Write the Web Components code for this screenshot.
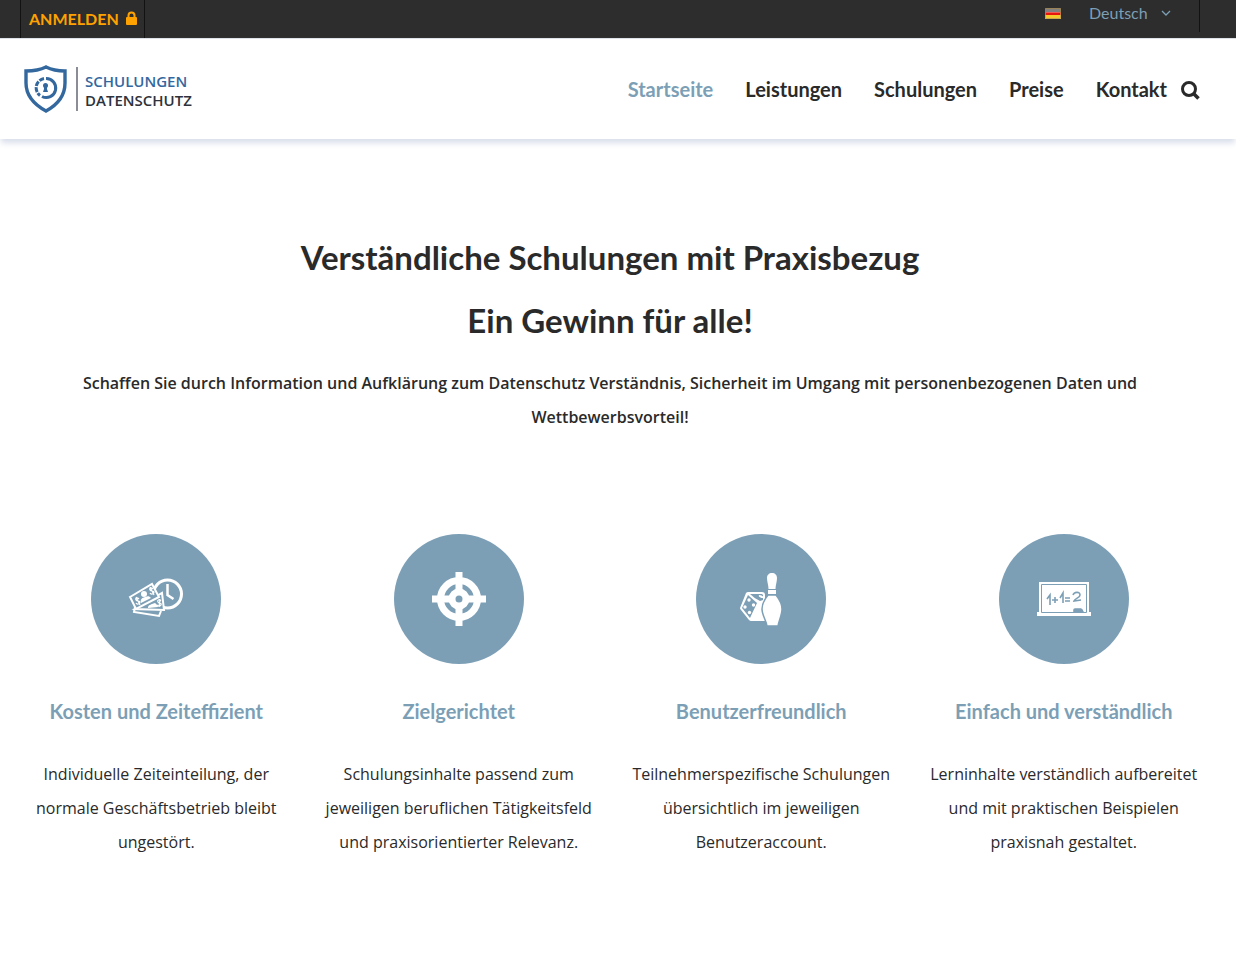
<!DOCTYPE html>
<html lang="de">
<head>
<meta charset="utf-8">
<meta name="viewport" content="width=device-width, initial-scale=1">
<title>Schulungen Datenschutz</title>
<style>
:root {
  --accent: #7c9fb6;
  --dark: #2d2d2d;
  --text: #2a2a2a;
  --login: #ffa200;
  --heading-font: Lato, "Liberation Sans", sans-serif;
}
body {
  margin: 0;
  background: #fff;
  color: var(--text);
  font-family: "Open Sans", "Liberation Sans", sans-serif;
  font-size: 16px;
}
</style>
</head>
<body>
<top-bar></top-bar>
<site-header>
  <site-logo slot="logo"></site-logo>
  <nav-link href="#start" active>Startseite</nav-link>
  <nav-link href="#leistungen">Leistungen</nav-link>
  <nav-link href="#schulungen">Schulungen</nav-link>
  <nav-link href="#preise">Preise</nav-link>
  <nav-link href="#kontakt">Kontakt</nav-link>
</site-header>
<main>
  <intro-section>
    <span slot="title">Verständliche Schulungen mit Praxisbezug</span>
    <span slot="subtitle">Ein Gewinn für alle!</span>
    Schaffen Sie durch Information und Aufklärung zum Datenschutz Verständnis, Sicherheit im Umgang mit personenbezogenen Daten und Wettbewerbsvorteil!
  </intro-section>
  <feature-list>
    <feature-card>
      <svg slot="icon" width="56" height="56" viewBox="0 0 56 56" fill="none" stroke="#fff" stroke-width="2" aria-hidden="true">
        <circle cx="39.500" cy="23" r="14" stroke-width="3"/>
        <path d="M39.500 13v11l6 4" stroke-width="2.500"/>
        <path d="M7 36l-1 5 25 4 2-5" fill="#7c9fb6"/>
        <path d="M7 38l27-16 2 17z" fill="#7c9fb6"/>
        <path d="M20 37c0-3 2-3 4-4l3-1c1 1 3 2 3 4z" fill="#fff" stroke="none"/>
        <path d="M2 26l22-13 7 13-23 12z" fill="#7c9fb6"/>
        <circle cx="16" cy="23" r="3" fill="#fff" stroke="none"/>
        <path d="M13 32c-1-4 1-5 4-6s4-1 6 1z" fill="#fff" stroke="none"/>
        <path d="M11 28c-2-2-4-1-3 1s4 0 4 2-3 3-4 1M8 26l4 8M25 18c-2-2-4-1-3 1s4 0 4 2-3 3-4 1M22 16l4 8M33 30c-2-2-4-1-3 1s4 1 3 3-3 1-4 0M32 28l-1 8" stroke-width="1.200"/>
      </svg>
      <span slot="title">Kosten und Zeiteffizient</span>
      Individuelle Zeiteinteilung, der normale Geschäftsbetrieb bleibt ungestört.
    </feature-card>
    <feature-card>
      <svg slot="icon" width="56" height="56" viewBox="0 0 56 56" fill="none" stroke="#fff" aria-hidden="true">
        <circle cx="28" cy="28" r="18.500" stroke-width="7"/>
        <circle cx="28" cy="28" r="7" stroke-width="7"/>
        <path d="M28 1v20M28 35v20M1 28h20M35 28h20" stroke-width="7"/>
      </svg>
      <span slot="title">Zielgerichtet</span>
      Schulungsinhalte passend zum jeweiligen beruflichen Tätigkeitsfeld und praxisorientierter Relevanz.
    </feature-card>
    <feature-card>
      <svg slot="icon" width="56" height="56" viewBox="0 0 56 56" fill="#fff" aria-hidden="true">
        <path d="M15 21h14q3 0 3 3v26H18q-1 0-2-1L8 39q-1-1-1-2l6-15q1-1 2-1z"/>
        <path d="M15 24l9 8-7 15-8-10z" fill="#7c9fb6"/>
        <path d="M17 23h12l1 1v5l-3 1q-5-2-10-7z" fill="#7c9fb6"/>
        <ellipse cx="28" cy="25.500" rx="2.500" ry="1.200" transform="rotate(25 28 25.500)"/>
        <circle cx="16" cy="29" r="1.700"/>
        <circle cx="20.500" cy="34" r="1.700"/>
        <circle cx="12" cy="36" r="1.700"/>
        <circle cx="16.500" cy="41.500" r="1.700"/>
        <path d="M35 24h8c4 5 6 9 6 14 0 6-3 11-4 17H34c-1-6-5-11-5-17 0-5 2-9 6-14z" stroke="#7c9fb6" stroke-width="1.500"/>
        <path d="M35 19h8v4h-8zM35.500 18c0-4-1.500-7-1.500-11 0-3 2-5 5-5s5 2 5 5c0 4-1.500 7-1.500 11z"/>
      </svg>
      <span slot="title">Benutzerfreundlich</span>
      Teilnehmerspezifische Schulungen übersichtlich im jeweiligen Benutzeraccount.
    </feature-card>
    <feature-card>
      <svg slot="icon" width="56" height="56" viewBox="0 0 56 56" fill="none" stroke="#7c9fb6" stroke-width="1.600" aria-hidden="true">
        <path d="M3 11h50v30h2v4H1v-4h2z" fill="#fff" stroke="none"/>
        <path d="M5.500 41.500v-28h45v28z" stroke-width="1"/>
        <path d="M11 28l3-4v10M16 29h6M19 26v6M24 27l3-5v10M29 27h5M29 30h5M37 24c1-3 7-4 7 0 0 3-5 3-6 6l7-1"/>
        <path d="M38 41v-2q0-1 1-1h6q1 0 2 3z" fill="#7c9fb6"/>
      </svg>
      <span slot="title">Einfach und verständlich</span>
      Lerninhalte verständlich aufbereitet und mit praktischen Beispielen praxisnah gestaltet.
    </feature-card>
  </feature-list>
</main>

<script>
// dark strip with login link and language switch
const TopBarTemplate = document.createElement('template');
TopBarTemplate.innerHTML = `
<style>
:host {
  display: block;
  background: var(--dark);
  font-family: var(--heading-font);
}
.bar {
  display: flex;
  justify-content: space-between;
  align-items: flex-start;
  height: 38px;
  margin: 0 36px 0 20px;
}
.login {
  display: flex;
  align-items: center;
  gap: 7px;
  height: 38px;
  box-sizing: border-box;
  padding: 0 7px 2px 8px;
  border: solid #121212;
  border-width: 0 1px;
  color: var(--login);
  font-size: 16px;
  font-weight: 700;
  text-decoration: none;
}
.language {
  display: flex;
  align-items: center;
  height: 32px;
  box-sizing: border-box;
  padding: 0 28px 6px 0;
  border-right: 1px solid #121212;
}
select {
  appearance: none;
  margin: 0 0 0 28px;
  padding: 0 13px 0 0;
  border: 0;
  background: transparent;
  color: var(--accent);
  font: 400 16px/24px var(--heading-font);
  cursor: pointer;
}
option {
  background: var(--dark);
}
</style>
<div class="bar">
  <a class="login" href="#login">ANMELDEN
    <svg width="11" height="14" viewBox="0 0 11 14" aria-hidden="true">
      <path d="M2.500 7V4.500a3 3 0 0 1 6 0V7" fill="none" stroke="#ffa200" stroke-width="2"/>
      <rect y="6" width="11" height="8" rx="1" fill="#ffa200"/>
    </svg>
  </a>
  <div class="language">
    <svg width="16" height="11" viewBox="0 0 16 11" aria-hidden="true">
      <path d="M0 0h16v4H0z" fill="#4f4a48"/>
      <path d="M0 4h16v4H0z" fill="#e8150f"/>
      <path d="M0 7h16v4H0z" fill="#f6c92c"/>
      <path d="M1 1h14v4H1z" fill="#fff" opacity=".3"/>
      <path d="M.5.500h15v10H.5z" fill="none" stroke="#b99a5c" opacity=".7"/>
    </svg>
    <select aria-label="Sprache">
      <option selected>Deutsch</option>
    </select>
    <svg width="10" height="6" viewBox="0 0 10 6" fill="none" stroke="#7c9fb6" stroke-width="1.300" aria-hidden="true">
      <path d="M1 1l4 4 4-4"/>
    </svg>
  </div>
</div>
`;

class TopBar extends HTMLElement {
  constructor() {
    super();
    this.attachShadow({ mode: 'open' });
    this.shadowRoot.appendChild(TopBarTemplate.content.cloneNode(true));
  }
}

const SiteLogoTemplate = document.createElement('template');
SiteLogoTemplate.innerHTML = `
<style>
:host {
  display: block;
}
a {
  display: flex;
  align-items: center;
  color: #2e323c;
  font: 600 15px/19px "Open Sans", "Liberation Sans", sans-serif;
  text-decoration: none;
}
.name {
  display: flex;
  flex-direction: column;
  margin-left: 8px;
  padding: 5px 0 1px 7px;
  border-left: 2px solid #8b8d96;
}
.name span:first-child {
  color: #33689f;
}
</style>
<a href="#start">
  <svg width="44" height="48" viewBox="0 0 44 48" fill="none" stroke="#33689f" aria-hidden="true">
    <path d="M22 2C16 5 9 6 2 6v12c0 13 9 22 20 28 11-6 19-15 19-28V6C35 6 28 5 22 2z" stroke-width="3.400"/>
    <path d="M22 13.500a9.500 9.500 0 1 1-4 18" stroke-width="3"/>
    <path d="M20 13.500a9.500 9.500 0 0 0-4 17" stroke-width="3" stroke-dasharray="5 1.200"/>
    <circle cx="21.500" cy="20.500" r="2.500" fill="#33689f" stroke="none"/>
    <path d="M20 20h3v4l1 3h-5l1-3z" fill="#33689f" stroke="none"/>
  </svg>
  <span class="name"><span>SCHULUNGEN</span><span>DATENSCHUTZ</span></span>
</a>
`;

class SiteLogo extends HTMLElement {
  constructor() {
    super();
    this.attachShadow({ mode: 'open' });
    this.shadowRoot.appendChild(SiteLogoTemplate.content.cloneNode(true));
  }
}

const SiteHeaderTemplate = document.createElement('template');
SiteHeaderTemplate.innerHTML = `
<style>
:host {
  display: block;
  border-top: 1px solid #dde1e8;
  box-shadow: 0 5px 6px -1px #d9deea;
}
header {
  display: flex;
  justify-content: space-between;
  align-items: center;
  height: 100px;
  margin: 0 36px 0 24px;
}
.right {
  display: flex;
  align-items: center;
  gap: 14px;
}
nav {
  display: flex;
  gap: 32px;
}
button {
  all: unset;
  display: flex;
  padding-top: 2px;
  cursor: pointer;
}
</style>
<header>
  <slot name="logo"></slot>
  <div class="right">
    <nav><slot></slot></nav>
    <button type="button" aria-label="Suche">
      <svg width="19" height="19" viewBox="0 0 19 19" fill="none" stroke="#2a2a2a" aria-hidden="true">
        <circle cx="8" cy="8" r="6.500" stroke-width="3"/>
        <path d="M12.500 12.500l5 5" stroke-width="3.500"/>
      </svg>
    </button>
  </div>
</header>
`;

class SiteHeader extends HTMLElement {
  constructor() {
    super();
    this.attachShadow({ mode: 'open' });
    this.shadowRoot.appendChild(SiteHeaderTemplate.content.cloneNode(true));
  }
}

const NavLinkTemplate = document.createElement('template');
NavLinkTemplate.innerHTML = `
<style>
:host {
  display: block;
}
a {
  color: var(--text);
  font: 700 20px/30px var(--heading-font);
  text-decoration: none;
}
:host([active]) a {
  color: var(--accent);
}
</style>
<a><slot></slot></a>
`;

class NavLink extends HTMLElement {
  constructor() {
    super();
    this.attachShadow({ mode: 'open' });
    this.shadowRoot.appendChild(NavLinkTemplate.content.cloneNode(true));
  }

  connectedCallback() {
    this.shadowRoot.querySelector('a').href = this.getAttribute('href');
  }
}

const IntroSectionTemplate = document.createElement('template');
IntroSectionTemplate.innerHTML = `
<style>
:host {
  display: block;
  padding: 97px 96px 100px 80px;
  text-align: center;
}
h1, h2 {
  margin: 0 0 20px;
  font: 700 33px/43px var(--heading-font);
}
h2 {
  margin-bottom: 24px;
}
p {
  margin: 0;
  font-weight: 600;
  line-height: 34px;
}
</style>
<h1><slot name="title"></slot></h1>
<h2><slot name="subtitle"></slot></h2>
<p><slot></slot></p>
`;

class IntroSection extends HTMLElement {
  constructor() {
    super();
    this.attachShadow({ mode: 'open' });
    this.shadowRoot.appendChild(IntroSectionTemplate.content.cloneNode(true));
  }
}

const FeatureListTemplate = document.createElement('template');
FeatureListTemplate.innerHTML = `
<style>
:host {
  display: grid;
  grid-template-columns: repeat(auto-fit, minmax(240px, 1fr));
  gap: 30px;
  padding: 0 36px 100px 20px;
}
</style>
<slot></slot>
`;

class FeatureList extends HTMLElement {
  constructor() {
    super();
    this.attachShadow({ mode: 'open' });
    this.shadowRoot.appendChild(FeatureListTemplate.content.cloneNode(true));
  }
}

// round icon, title and text
const FeatureCardTemplate = document.createElement('template');
FeatureCardTemplate.innerHTML = `
<style>
:host {
  display: flex;
  flex-direction: column;
  align-items: center;
  text-align: center;
}
.circle {
  display: flex;
  align-items: center;
  justify-content: center;
  width: 130px;
  height: 130px;
  border-radius: 50%;
  background: var(--accent);
}
h3 {
  margin: 31px 0 30px;
  color: var(--accent);
  font: 700 20px/32px var(--heading-font);
}
p {
  margin: 0;
  line-height: 34px;
}
</style>
<div class="circle"><slot name="icon"></slot></div>
<h3><slot name="title"></slot></h3>
<p><slot></slot></p>
`;

class FeatureCard extends HTMLElement {
  constructor() {
    super();
    this.attachShadow({ mode: 'open' });
    this.shadowRoot.appendChild(FeatureCardTemplate.content.cloneNode(true));
  }
}

window.customElements.define('top-bar', TopBar);
window.customElements.define('site-logo', SiteLogo);
window.customElements.define('site-header', SiteHeader);
window.customElements.define('nav-link', NavLink);
window.customElements.define('intro-section', IntroSection);
window.customElements.define('feature-list', FeatureList);
window.customElements.define('feature-card', FeatureCard);
</script>
</body>
</html>
